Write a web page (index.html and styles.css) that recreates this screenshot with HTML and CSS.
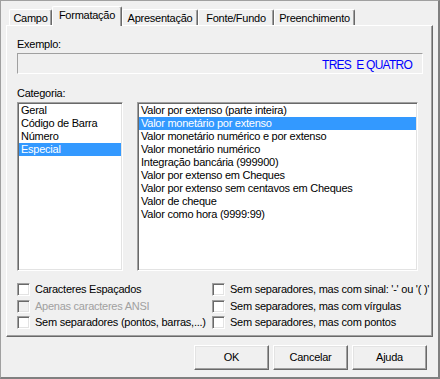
FILE: index.html
```html
<!DOCTYPE html>
<html lang="pt">
<head>
<meta charset="utf-8">
<title>Formatação</title>
<link rel="stylesheet" href="styles.css">
</head>
<body>
<div class="window">
  <div class="tabs">
    <div class="tab tab-campo">Campo</div>
    <div class="tab tab-active">Formatação</div>
    <div class="tab tab-apres">Apresentação</div>
    <div class="tab tab-fonte">Fonte/Fundo</div>
    <div class="tab tab-preen">Preenchimento</div>
  </div>
  <div class="panel">
    <div class="label label-example">Exemplo:</div>
    <div class="example">TRES&nbsp; E QUATRO</div>
    <div class="label label-cat">Categoria:</div>
    <div class="lists">
      <ul class="listbox list-cat">
        <li>Geral</li>
        <li>Código de Barra</li>
        <li>Número</li>
        <li class="selected">Especial</li>
      </ul>
      <ul class="listbox list-types">
        <li>Valor por extenso (parte inteira)</li>
        <li class="selected">Valor monetário por extenso</li>
        <li>Valor monetário numérico e por extenso</li>
        <li>Valor monetário numérico</li>
        <li>Integração bancária (999900)</li>
        <li>Valor por extenso em Cheques</li>
        <li>Valor por extenso sem centavos em Cheques</li>
        <li>Valor de cheque</li>
        <li>Valor como hora (9999:99)</li>
      </ul>
    </div>
    <div class="checks">
      <div class="check"><span class="box"></span><span>Caracteres Espaçados</span></div>
      <div class="check"><span class="box"></span><span>Sem separadores, mas com sinal: '-' ou '( )'</span></div>
      <div class="check disabled"><span class="box"></span><span>Apenas caracteres ANSI</span></div>
      <div class="check"><span class="box"></span><span>Sem separadores, mas com vírgulas</span></div>
      <div class="check"><span class="box"></span><span>Sem separadores (pontos, barras,...)</span></div>
      <div class="check"><span class="box"></span><span>Sem separadores, mas com pontos</span></div>
    </div>
  </div>
  <div class="buttons">
    <div class="button">OK</div>
    <div class="button">Cancelar</div>
    <div class="button">Ajuda</div>
  </div>
</div>
</body>
</html>
```
FILE: styles.css
```css
* {
  box-sizing: border-box;
}

html, body {
  margin: 0;
  padding: 0;
  background: #f0f0f0;
}

body {
  font-family: "Liberation Sans", Arial, sans-serif;
  font-size: 11px;
  letter-spacing: -0.25px;
  color: #000;
}

.window {
  width: 440px;
  height: 379px;
  background: #f0f0f0;
  border-top: 1px solid #a0a0a0;
  border-left: 1px solid #a0a0a0;
  border-right: 2px solid #808080;
  border-bottom: 2px solid #808080;
}

/* Tabs */
.tabs {
  display: flex;
  align-items: flex-end;
  height: 19px;
  margin-top: 5px;
  padding-left: 8px;
}

.tab {
  height: 16px;
  padding-top: 2px;
  line-height: 13px;
  text-align: center;
  white-space: nowrap;
  border-top: 1px solid #fff;
  border-left: 1px solid #fff;
  border-right: 1px solid #696969;
  box-shadow: inset -1px 0 #a0a0a0;
  border-top-left-radius: 2px;
  border-top-right-radius: 2px;
}

.tab-campo { width: 43px; }
.tab-apres { width: 76px; }
.tab-fonte { width: 76px; }
.tab-preen { width: 81px; }

.tab-active {
  position: relative;
  z-index: 1;
  width: 70px;
  height: 20px;
  margin-bottom: -1px;
  padding-top: 2px;
  background: #f0f0f0;
}

/* Panel */
.panel {
  width: 427px;
  height: 312px;
  margin-left: 5px;
  padding-left: 10px;
  border-top: 1px solid #fff;
  border-left: 1px solid #fff;
  border-right: 1px solid #696969;
  border-bottom: 1px solid #696969;
  box-shadow: inset -1px -1px #a0a0a0;
}

.label {
  line-height: 13px;
  height: 13px;
}

.label-example {
  margin-top: 12px;
}

.example {
  width: 406px;
  height: 21px;
  margin-top: 2px;
  padding: 4px 10px 0 0;
  border-top: 1px solid #a0a0a0;
  border-left: 1px solid #a0a0a0;
  border-right: 1px solid #fff;
  border-bottom: 1px solid #fff;
  color: #0000ff;
  font-size: 12px;
  letter-spacing: -0.75px;
  line-height: 14px;
  text-align: right;
  white-space: pre;
}

.label-cat {
  margin-top: 13px;
}

.lists {
  display: flex;
  gap: 14px;
  margin-top: 2px;
  height: 169px;
}

.listbox {
  list-style: none;
  margin: 0;
  padding: 0;
  height: 169px;
  background: #fff;
  border-top: 1px solid #a0a0a0;
  border-left: 1px solid #a0a0a0;
  border-right: 1px solid #fff;
  border-bottom: 1px solid #fff;
  box-shadow: inset 1px 1px #696969, inset -1px -1px #e3e3e3;
  padding: 1px;
}

.list-cat {
  width: 106px;
}

.list-types {
  width: 281px;
}

.listbox li {
  height: 13px;
  line-height: 13px;
  padding-left: 2px;
  white-space: nowrap;
}

.listbox li.selected {
  background: #3399ff;
  color: #fff;
}

/* Checkboxes */
.checks {
  display: grid;
  grid-template-columns: 195px 1fr;
  grid-auto-rows: 13px;
  row-gap: 3.5px;
  margin-top: 12px;
}

.check {
  display: flex;
  align-items: center;
  gap: 5px;
  height: 13px;
  line-height: 13px;
  white-space: nowrap;
}

.box {
  flex: none;
  width: 13px;
  height: 13px;
  background: #fff;
  border-top: 1px solid #a0a0a0;
  border-left: 1px solid #a0a0a0;
  border-right: 1px solid #fff;
  border-bottom: 1px solid #fff;
  box-shadow: inset 1px 1px #696969, inset -1px -1px #e3e3e3;
}

.check.disabled {
  color: #a0a0a0;
}

.check.disabled .box {
  background: #f0f0f0;
}

/* Buttons */
.buttons {
  display: flex;
  justify-content: flex-end;
  gap: 4px;
  margin-top: 8px;
  padding-right: 11px;
}

.button {
  width: 75px;
  height: 25px;
  line-height: 23px;
  text-align: center;
  border-top: 1px solid #fff;
  border-left: 1px solid #fff;
  border-right: 1px solid #696969;
  border-bottom: 1px solid #696969;
  box-shadow: inset -1px -1px #a0a0a0, inset 1px 1px #e3e3e3;
}
```
